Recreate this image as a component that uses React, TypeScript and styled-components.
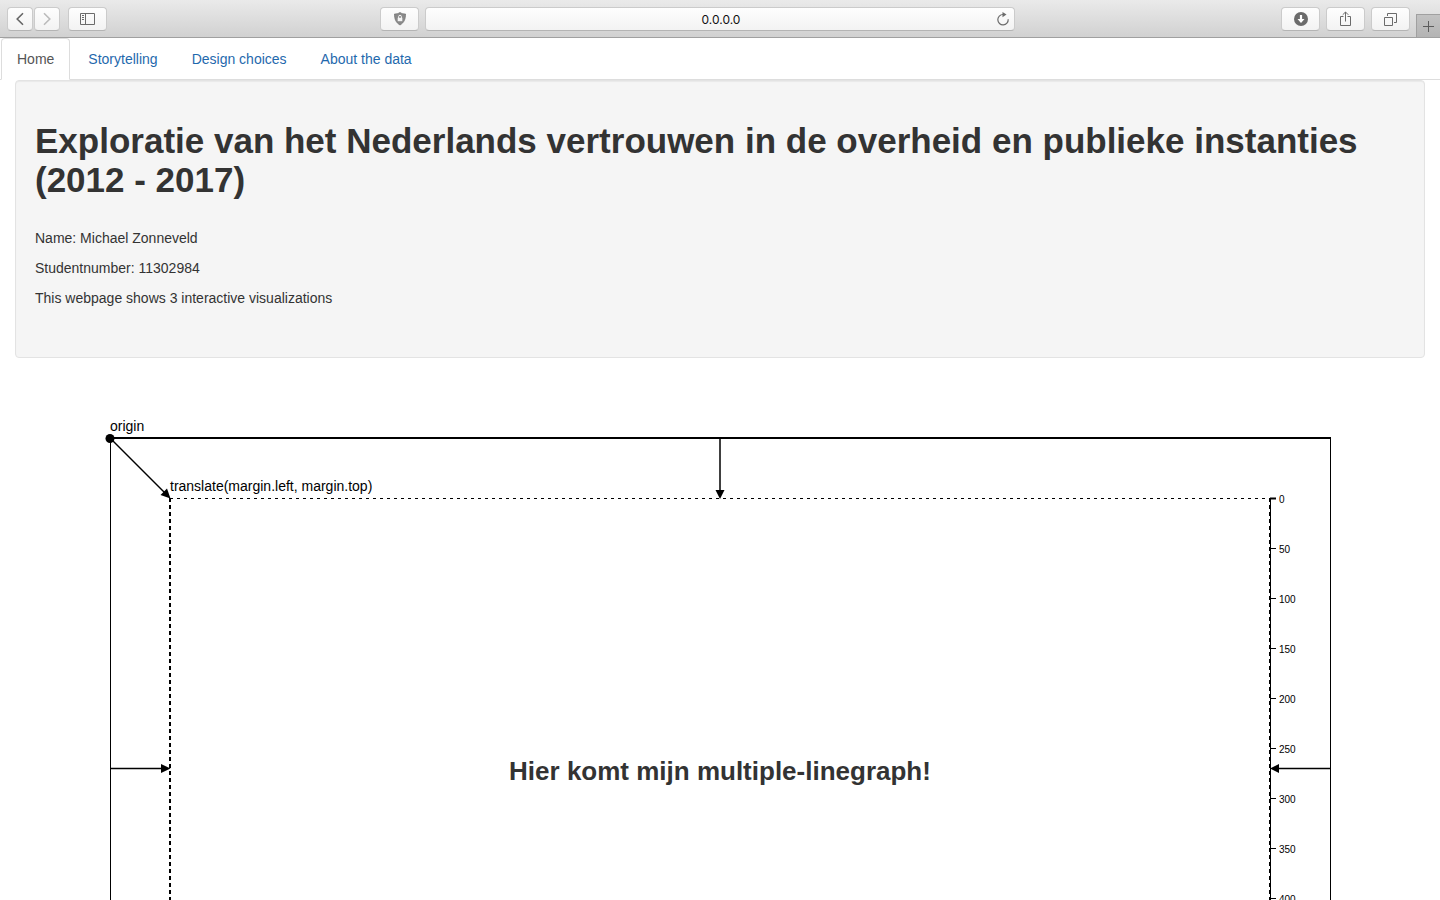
import React from 'react';
import styled, { createGlobalStyle } from 'styled-components';

const GlobalStyle = createGlobalStyle`
  *, *::before, *::after { box-sizing: border-box; }
  body {
    margin: 0;
    background: #fff;
    color: #333;
    font-family: "Liberation Sans", Arial, sans-serif;
    font-size: 14px;
    line-height: 20px;
  }
`;

const Browser = styled.div`
  display: flex;
  flex-direction: column;
  height: 100vh;
`;

const Toolbar = styled.header`
  flex: none;
  display: grid;
  grid-template-columns: 1fr minmax(0, 590px) 1fr;
  column-gap: 6px;
  height: 38px;
  padding-top: 7px;
  background: linear-gradient(#eaeaea, #d1d1d1);
  border-bottom: 1px solid #a0a0a0;
`;

const ToolSide = styled.div`
  display: flex;
  justify-content: space-between;
  align-items: flex-start;
  padding-left: 7px;
`;

const ToolGroup = styled.div<{ $gap: number }>`
  display: flex;
  gap: ${(p) => p.$gap}px;
`;

const WindowTools = styled.div`
  display: flex;
  justify-content: flex-end;
  gap: 6px;
`;

const ToolButton = styled.button<{ $narrow?: boolean }>`
  display: flex;
  align-items: center;
  justify-content: center;
  width: ${(p) => (p.$narrow ? 26 : 39)}px;
  height: 24px;
  padding: 0;
  border: 1px solid #cbcbcb;
  border-bottom-color: #b4b4b4;
  border-radius: 4px;
  background: linear-gradient(#fefefe, #f3f3f3);
  color: #6b6b6b;
`;

const NewTabButton = styled.button`
  display: flex;
  align-items: center;
  justify-content: center;
  width: 24px;
  height: 23px;
  margin-top: 7px;
  padding: 1px 0 0;
  border: solid #a0a0a0;
  border-width: 1px 0 0 1px;
  background: linear-gradient(#c2c2c2, #b4b4b4);
  color: #5c5c5c;
`;

const AddressBar = styled.form`
  display: flex;
  height: 24px;
  padding-left: 24px;
  border: 1px solid #cbcbcb;
  border-bottom-color: #b4b4b4;
  border-radius: 4px;
  background: linear-gradient(#fefefe, #f3f3f3);
`;

const AddressInput = styled.input`
  flex: 1;
  min-width: 0;
  padding: 1px 0 0;
  border: 0;
  outline: 0;
  background: none;
  color: #111;
  font: 12px/22px Inter, sans-serif;
  text-align: center;
`;

const ReloadButton = styled.button`
  display: flex;
  align-items: center;
  justify-content: center;
  width: 22px;
  padding: 0;
  border: 0;
  background: none;
  color: #6b6b6b;
`;

const Page = styled.div`
  flex: 1;
  min-height: 0;
  overflow-y: auto;
  scrollbar-width: none;
`;

const Tabs = styled.nav`
  display: flex;
  gap: 2px;
  padding-left: 1px;
  border-bottom: 1px solid #ddd;
`;

const Tab = styled.a<{ $active?: boolean }>`
  margin-bottom: -1px;
  padding: 10px 15px;
  border: 1px solid ${(p) => (p.$active ? '#ddd' : 'transparent')};
  border-bottom-color: ${(p) => (p.$active ? '#fff' : 'transparent')};
  border-radius: 4px 4px 0 0;
  color: ${(p) => (p.$active ? '#555' : '#1f69ad')};
  text-decoration: none;
`;

const Well = styled.section`
  margin: 0 15px;
  padding: 40px 19px 49px;
  border: 1px solid #e3e3e3;
  border-radius: 4px;
  background: #f5f5f5;
  box-shadow: inset 0 1px 1px rgba(0, 0, 0, 0.05);
`;

const Title = styled.h1`
  margin: 0 0 29px;
  font-size: 35px;
  line-height: 39px;
  font-weight: 700;
`;

const Detail = styled.p`
  margin: 0 0 10px;

  &:last-child { margin-bottom: 0; }
`;

const ChartFigure = styled.figure`
  display: flex;
  justify-content: center;
  margin: 60px 0;
`;

const Chart = styled.svg`
  width: 1240px;
  max-width: 100%;
  height: auto;
  fill: #000;

  line { stroke: #000; }
`;

const ChartLabel = styled.text`
  font-size: 14px;
`;

const TickLabel = styled.text`
  font-size: 10px;
`;

const ChartCaption = styled.text`
  fill: #333;
  font-size: 26px;
  font-weight: 700;
  text-anchor: middle;
`;

const links = ['Home', 'Storytelling', 'Design choices', 'About the data'];
const ticks = [0, 50, 100, 150, 200, 250, 300, 350, 400, 450, 500];

const Chevron = ({ d, color }: { d: string; color: string }) => (
  <svg width="12" height="16" viewBox="0 0 12 16" fill="none" stroke={color} strokeWidth="1.6">
    <path d={d} />
  </svg>
);

function BrowserToolbar() {
  return (
    <Toolbar>
      <ToolSide>
        <ToolGroup $gap={8}>
          <ToolGroup $gap={1}>
            <ToolButton $narrow aria-label="Back">
              <Chevron d="M9 2.2 3.2 8 9 13.8" color="#666" />
            </ToolButton>
            <ToolButton $narrow aria-label="Forward">
              <Chevron d="M3 2.2 8.8 8 3 13.8" color="#bbb" />
            </ToolButton>
          </ToolGroup>
          <ToolButton aria-label="Sidebar">
            <svg width="15" height="12" viewBox="0 0 15 12" fill="none" stroke="currentColor">
              <path d="M.5.5h14v11H.5zM5.5.5v11M2 2.5h2M2 4.5h2M2 6.5h2" />
            </svg>
          </ToolButton>
        </ToolGroup>
        <ToolButton aria-label="Privacy">
          <svg width="12" height="14" viewBox="0 0 12 14">
            <path d="M6 .5C7.8 1.7 9.5 2 11.5 2c0 5-1.3 8.500-5.500 11C1.800 10.500.5 7 .5 2 2.500 2 4.200 1.700 6 .5z" fill="#8a8a8a" stroke="#777" strokeWidth=".8" />
            <path d="M3.700 5.800h4.600v3.400H3.700z" fill="#f4f4f4" />
            <path d="M4.600 6V4.700a1.400 1.400 0 0 1 2.800 0V6" fill="none" stroke="#f4f4f4" />
          </svg>
        </ToolButton>
      </ToolSide>
      <AddressBar onSubmit={(e) => e.preventDefault()}>
        <AddressInput aria-label="Address" defaultValue="0.0.0.0" />
        <ReloadButton type="button" aria-label="Reload">
          <svg width="14" height="14" viewBox="0 0 14 14" fill="none" stroke="currentColor" strokeWidth="1.2">
            <path d="M12.200 7.300A5.200 5.200 0 1 1 7 2.500h1.500" />
            <path d="M6.500 0 10.500 2.600 6.500 5.200z" fill="currentColor" stroke="none" />
          </svg>
        </ReloadButton>
      </AddressBar>
      <WindowTools>
        <ToolButton aria-label="Downloads">
          <svg width="14" height="14" viewBox="0 0 14 14">
            <circle cx="7" cy="7" r="7" fill="#6b6b6b" />
            <path d="M5.900 3h2.200v4h2.400L7 10.900 3.500 7h2.400z" fill="#fff" />
          </svg>
        </ToolButton>
        <ToolButton aria-label="Share">
          <svg width="13" height="16" viewBox="0 0 13 16" fill="none" stroke="currentColor">
            <path d="M4.500 5.500h-3v9h10v-9h-3M6.500 10.500V1M3.700 3.800 6.500 1l2.800 2.800" />
          </svg>
        </ToolButton>
        <ToolButton aria-label="Show all tabs">
          <svg width="13" height="13" viewBox="0 0 13 13" fill="none" stroke="currentColor">
            <path d="M.5 4.500h8v8h-8zM3.500 3V.5h9v9H10" />
          </svg>
        </ToolButton>
        <NewTabButton aria-label="New tab">
          <svg width="11" height="11" viewBox="0 0 11 11" stroke="currentColor">
            <path d="M5.500 0v11M0 5.500h11" />
          </svg>
        </NewTabButton>
      </WindowTools>
    </Toolbar>
  );
}

function MarginChart() {
  return (
    <ChartFigure>
      <Chart viewBox="-10 -20 1240 700" role="img" aria-label="Multiple-linegraph placeholder">
        {/* outer frame */}
        <line x1="0" y1="0" x2="1221" y2="0" strokeWidth="2" />
        <line x1="0.5" y1="0" x2="0.5" y2="660" />
        <line x1="1220.5" y1="0" x2="1220.5" y2="660" />
        <line x1="0" y1="660" x2="1221" y2="660" strokeWidth="2" />

        {/* plot area inside the margins */}
        <g strokeDasharray="3 4">
          <line x1="60" y1="60.5" x2="1160" y2="60.5" />
          <line x1="60" y1="600.5" x2="1160" y2="600.5" />
        </g>
        <g strokeDasharray="4 3">
          <line x1="60" y1="60" x2="60" y2="600" strokeWidth="2" />
          <line x1="1159.5" y1="60" x2="1159.5" y2="600" />
        </g>

        {/* margin arrows */}
        <line x1="0" y1="0" x2="56" y2="56" strokeWidth="1.5" />
        <polygon points="60.5,60.5 50.5,57 57,50.5" />
        <line x1="610" y1="0" x2="610" y2="54" strokeWidth="1.5" />
        <polygon points="610,61 605.5,52 614.5,52" />
        <line x1="0" y1="330.5" x2="54" y2="330.5" strokeWidth="1.5" />
        <polygon points="60.5,330.5 51,326 51,335" />
        <line x1="1220" y1="330.5" x2="1166" y2="330.5" strokeWidth="1.5" />
        <polygon points="1160,330.5 1169,326 1169,335" />
        <circle cx="0" cy="0.5" r="4.5" />

        <line x1="1160.5" y1="60" x2="1160.5" y2="600" />
        {ticks.map((t) => (
          <g key={t}>
            <line x1="1160" x2="1166" y1={60.5 + t} y2={60.5 + t} strokeWidth={t === 0 ? 2 : 1} />
            <TickLabel x="1169" y={65 + t}>{t}</TickLabel>
          </g>
        ))}

        <ChartLabel x="0" y="-7">origin</ChartLabel>
        <ChartLabel x="60" y="53">translate(margin.left, margin.top)</ChartLabel>
        <ChartCaption x="610" y="342">Hier komt mijn multiple-linegraph!</ChartCaption>
      </Chart>
    </ChartFigure>
  );
}

export default function App() {
  return (
    <Browser>
      <GlobalStyle />
      <BrowserToolbar />
      <Page>
        <Tabs>
          {links.map((label, i) => (
            <Tab key={label} href="#" $active={i === 0}>{label}</Tab>
          ))}
        </Tabs>
        <Well>
          <Title>Exploratie van het Nederlands vertrouwen in de overheid en publieke instanties (2012 - 2017)</Title>
          <Detail>Name: Michael Zonneveld</Detail>
          <Detail>Studentnumber: 11302984</Detail>
          <Detail>This webpage shows 3 interactive visualizations</Detail>
        </Well>
        <MarginChart />
      </Page>
    </Browser>
  );
}
